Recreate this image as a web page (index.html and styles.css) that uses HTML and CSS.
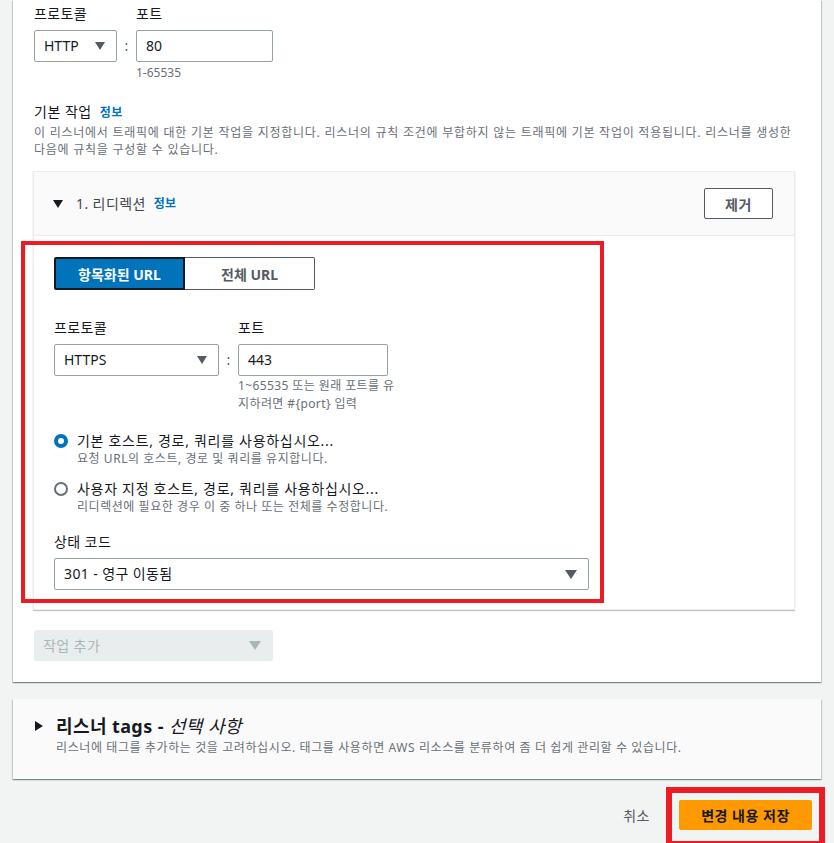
FILE: index.html
```html
<!DOCTYPE html>
<html lang="ko">
    <head>
        <meta charset="utf-8" />
        <meta name="viewport" content="width=device-width, initial-scale=1" />

        <title>리스너 편집</title>

        <link rel="stylesheet" href="styles.css">
    </head>

    <body>
        <div class="page">
            <div class="card card-main">
                <div class="field-row">
                    <div class="field">
                        <div class="label">프로토콜</div>
                        <div class="select select-small">
                            <span>HTTP</span>
                            <svg class="caret" width="10" height="8" viewBox="0 0 10 8"><path d="M0 0h10L5 8z" /></svg>
                        </div>
                    </div>
                    <div class="colon">:</div>
                    <div class="field">
                        <div class="label">포트</div>
                        <div class="input input-wide">80</div>
                        <div class="hint">1-65535</div>
                    </div>
                </div>

                <div class="section-head">기본 작업 <a class="info" href="#">정보</a></div>
                <p class="description">
                    이 리스너에서 트래픽에 대한 기본 작업을 지정합니다. 리스너의 규칙 조건에 부합하지 않는 트래픽에 기본 작업이 적용됩니다. 리스너를 생성한 다음에 규칙을 구성할 수 있습니다.
                </p>

                <div class="panel">
                    <div class="panel-header">
                        <div class="panel-title">
                            <svg class="toggle" width="10" height="8" viewBox="0 0 10 8"><path d="M0 0h10L5 8z" /></svg>
                            <span>1. 리디렉션</span>
                            <a class="info" href="#">정보</a>
                        </div>
                        <button class="btn-normal">제거</button>
                    </div>

                    <div class="panel-body">
                        <div class="segmented">
                            <button class="seg seg-active">항목화된 URL</button>
                            <button class="seg">전체 URL</button>
                        </div>

                        <div class="field-row field-row-spaced">
                            <div class="field">
                                <div class="label">프로토콜</div>
                                <div class="select select-medium">
                                    <span>HTTPS</span>
                                    <svg class="caret" width="10" height="8" viewBox="0 0 10 8"><path d="M0 0h10L5 8z" /></svg>
                                </div>
                            </div>
                            <div class="colon">:</div>
                            <div class="field">
                                <div class="label">포트</div>
                                <div class="input input-medium">443</div>
                                <div class="hint hint-narrow">1~65535 또는 원래 포트를 유지하려면 #{port} 입력</div>
                            </div>
                        </div>

                        <div class="radio-group">
                            <label class="radio">
                                <span class="radio-dot radio-checked"></span>
                                <span class="radio-text">
                                    <span class="radio-label">기본 호스트, 경로, 쿼리를 사용하십시오...</span>
                                    <span class="radio-desc">요청 URL의 호스트, 경로 및 쿼리를 유지합니다.</span>
                                </span>
                            </label>
                            <label class="radio">
                                <span class="radio-dot"></span>
                                <span class="radio-text">
                                    <span class="radio-label">사용자 지정 호스트, 경로, 쿼리를 사용하십시오...</span>
                                    <span class="radio-desc">리디렉션에 필요한 경우 이 중 하나 또는 전체를 수정합니다.</span>
                                </span>
                            </label>
                        </div>

                        <div class="label label-status">상태 코드</div>
                        <div class="select select-full">
                            <span>301 - 영구 이동됨</span>
                            <svg class="caret" width="12" height="9" viewBox="0 0 12 9"><path d="M0 0h12L6 9z" /></svg>
                        </div>

                        <div class="highlight highlight-panel"></div>
                    </div>
                </div>

                <div class="select select-disabled">
                    <span>작업 추가</span>
                    <svg class="caret" width="12" height="9" viewBox="0 0 12 9"><path d="M0 0h12L6 9z" /></svg>
                </div>
            </div>

            <div class="card card-tags">
                <div class="tags-head">
                    <svg class="toggle-right" width="8" height="10" viewBox="0 0 8 10"><path d="M0 0v10l8-5z" /></svg>
                    <span class="tags-title">리스너 tags - <i>선택 사항</i></span>
                </div>
                <div class="tags-desc">리스너에 태그를 추가하는 것을 고려하십시오. 태그를 사용하면 AWS 리소스를 분류하여 좀 더 쉽게 관리할 수 있습니다.</div>
            </div>

            <div class="actions">
                <button class="btn-link">취소</button>
                <div class="primary-wrap">
                    <button class="btn-primary">변경 내용 저장</button>
                    <div class="highlight highlight-save"></div>
                </div>
            </div>
        </div>
    </body>
</html>
```

FILE: styles.css
```css
body {
    margin: 0;
    background: #f2f3f3;
    font-family: "Noto Sans", "Noto Sans CJK KR", sans-serif;
    font-size: 14px;
    line-height: 22px;
    color: #16191f;
    word-break: keep-all;
}

button {
    font-family: inherit;
}

.page {
    padding: 0 13px;
}

.card {
    background: #fff;
    box-shadow: 0 1px 1px 0 rgba(0, 28, 36, 0.3),
        1px 1px 1px 0 rgba(0, 28, 36, 0.15),
        -1px 1px 1px 0 rgba(0, 28, 36, 0.15);
}

.card-main {
    padding: 3px 26px 21px 21px;
}

/* form fields */

.field-row {
    display: flex;
    align-items: flex-start;
}

.field-row-spaced {
    margin-top: 27px;
}

.label {
    line-height: 22px;
    margin-bottom: 5px;
    letter-spacing: 0.4px;
}

.colon {
    width: 19px;
    margin-top: 27px;
    line-height: 32px;
    text-align: center;
    color: #545b64;
}

.select,
.input {
    box-sizing: border-box;
    height: 32px;
    border: 1px solid #95a3a4;
    border-radius: 2px;
    background: #fff;
    display: flex;
    align-items: center;
    padding: 0 9px;
}

.select {
    justify-content: space-between;
    padding-right: 11px;
}

.caret {
    fill: #545b64;
}

.select-small {
    width: 83px;
}

.select-medium {
    width: 165px;
}

.select-full {
    width: 535px;
    letter-spacing: 0.4px;
}

.input-wide {
    width: 137px;
}

.input-medium {
    width: 150px;
}

.hint {
    margin-top: 2px;
    font-size: 12px;
    line-height: 18px;
    color: #687078;
}

.hint-narrow {
    width: 162px;
    margin-top: 1px;
    letter-spacing: 0.4px;
    word-break: normal;
}

.section-head {
    margin-top: 19px;
    letter-spacing: 0.5px;
}

.info {
    color: #0073bb;
    font-size: 12px;
    font-weight: bold;
    text-decoration: none;
    margin-left: 4px;
    letter-spacing: 0.3px;
}

.description {
    margin: 0;
    font-size: 12px;
    line-height: 17px;
    color: #687078;
    letter-spacing: 0.75px;
}

/* redirect panel */

.panel {
    margin: 13px 0 0 -1px;
    border: 1px solid #eaeded;
    box-shadow: 0 1px 1px 0 rgba(0, 28, 36, 0.25);
}

.panel-header {
    height: 63px;
    background: #fafafa;
    border-bottom: 1px solid #eaeded;
    display: flex;
    align-items: center;
    justify-content: space-between;
    padding: 0 21px 0 19px;
}

.panel-title {
    display: flex;
    align-items: center;
    color: #414750;
    letter-spacing: 0.4px;
}

.panel-title .toggle {
    fill: #16191f;
    margin-right: 13px;
}

.panel-title .info {
    margin-left: 8px;
}

.btn-normal {
    width: 69px;
    height: 31px;
    background: #fff;
    border: 1px solid #545b64;
    border-radius: 2px;
    color: #545b64;
    font-size: 14px;
    font-weight: bold;
    padding: 0;
    letter-spacing: 0.6px;
}

.panel-body {
    position: relative;
    padding: 21px 20px 19px 20px;
}

.segmented {
    display: flex;
}

.seg {
    box-sizing: border-box;
    width: 130px;
    height: 33px;
    background: #fff;
    border: 1px solid #545b64;
    border-left: none;
    border-radius: 0 2px 2px 0;
    color: #545b64;
    font-size: 14px;
    font-weight: bold;
    padding: 0;
}

.seg-active {
    width: 131px;
    background: #0073bb;
    border: 2px solid #16191f;
    border-radius: 2px 0 0 2px;
    color: #fff;
}

.radio-group {
    margin-top: 18px;
}

.radio {
    display: flex;
    align-items: flex-start;
}

.radio + .radio {
    margin-top: 12px;
}

.radio-dot {
    box-sizing: border-box;
    flex: none;
    width: 14px;
    height: 14px;
    margin-top: 3px;
    margin-right: 9px;
    border: 2px solid #687078;
    border-radius: 50%;
    background: #fff;
}

.radio-checked {
    border: 4px solid #0073bb;
}

.radio-text {
    display: flex;
    flex-direction: column;
}

.radio-label {
    line-height: 20px;
    letter-spacing: 0.7px;
}

.radio-desc {
    font-size: 12px;
    line-height: 16px;
    color: #687078;
    letter-spacing: 0.55px;
}

.label-status {
    margin-top: 16px;
}

.select-disabled {
    margin-top: 20px;
    width: 239px;
    height: 31px;
    border: none;
    background: #eaeded;
    color: #aab7b8;
    padding-right: 12px;
    letter-spacing: 0.4px;
}

.select-disabled .caret {
    fill: #aab7b8;
}

/* tags */

.card-tags {
    margin-top: 17px;
    background: #fafafa;
    padding: 14px 20px 23px 22px;
}

.tags-head {
    display: flex;
    align-items: center;
}

.toggle-right {
    fill: #16191f;
    margin-right: 13px;
}

.tags-title {
    font-size: 18px;
    line-height: 26px;
    font-weight: bold;
    letter-spacing: 0.4px;
}

.tags-title i {
    font-weight: normal;
}

.tags-desc {
    margin-top: 1px;
    padding-left: 21px;
    font-size: 12px;
    line-height: 16px;
    color: #687078;
    letter-spacing: 0.6px;
}

/* footer actions */

.actions {
    display: flex;
    justify-content: flex-end;
    align-items: center;
    padding: 21px 9px 13px 0;
}

.btn-link {
    background: none;
    border: none;
    color: #545b64;
    font-size: 14px;
    padding: 0;
    margin-right: 29px;
    letter-spacing: 0.5px;
}

.primary-wrap {
    position: relative;
}

.btn-primary {
    display: block;
    width: 133px;
    height: 30px;
    background: #ff9900;
    border: none;
    border-radius: 2px;
    color: #16191f;
    font-size: 14px;
    font-weight: bold;
    padding: 0;
    letter-spacing: 0.5px;
}

/* annotation boxes */

.highlight {
    position: absolute;
    box-sizing: border-box;
    border: 4px solid #ed1c24;
    pointer-events: none;
}

.highlight-panel {
    left: -13px;
    top: 5px;
    width: 583px;
    height: 362px;
}

.highlight-save {
    left: -13px;
    top: -13px;
    width: 159px;
    height: 60px;
    border-width: 6px;
}
```
